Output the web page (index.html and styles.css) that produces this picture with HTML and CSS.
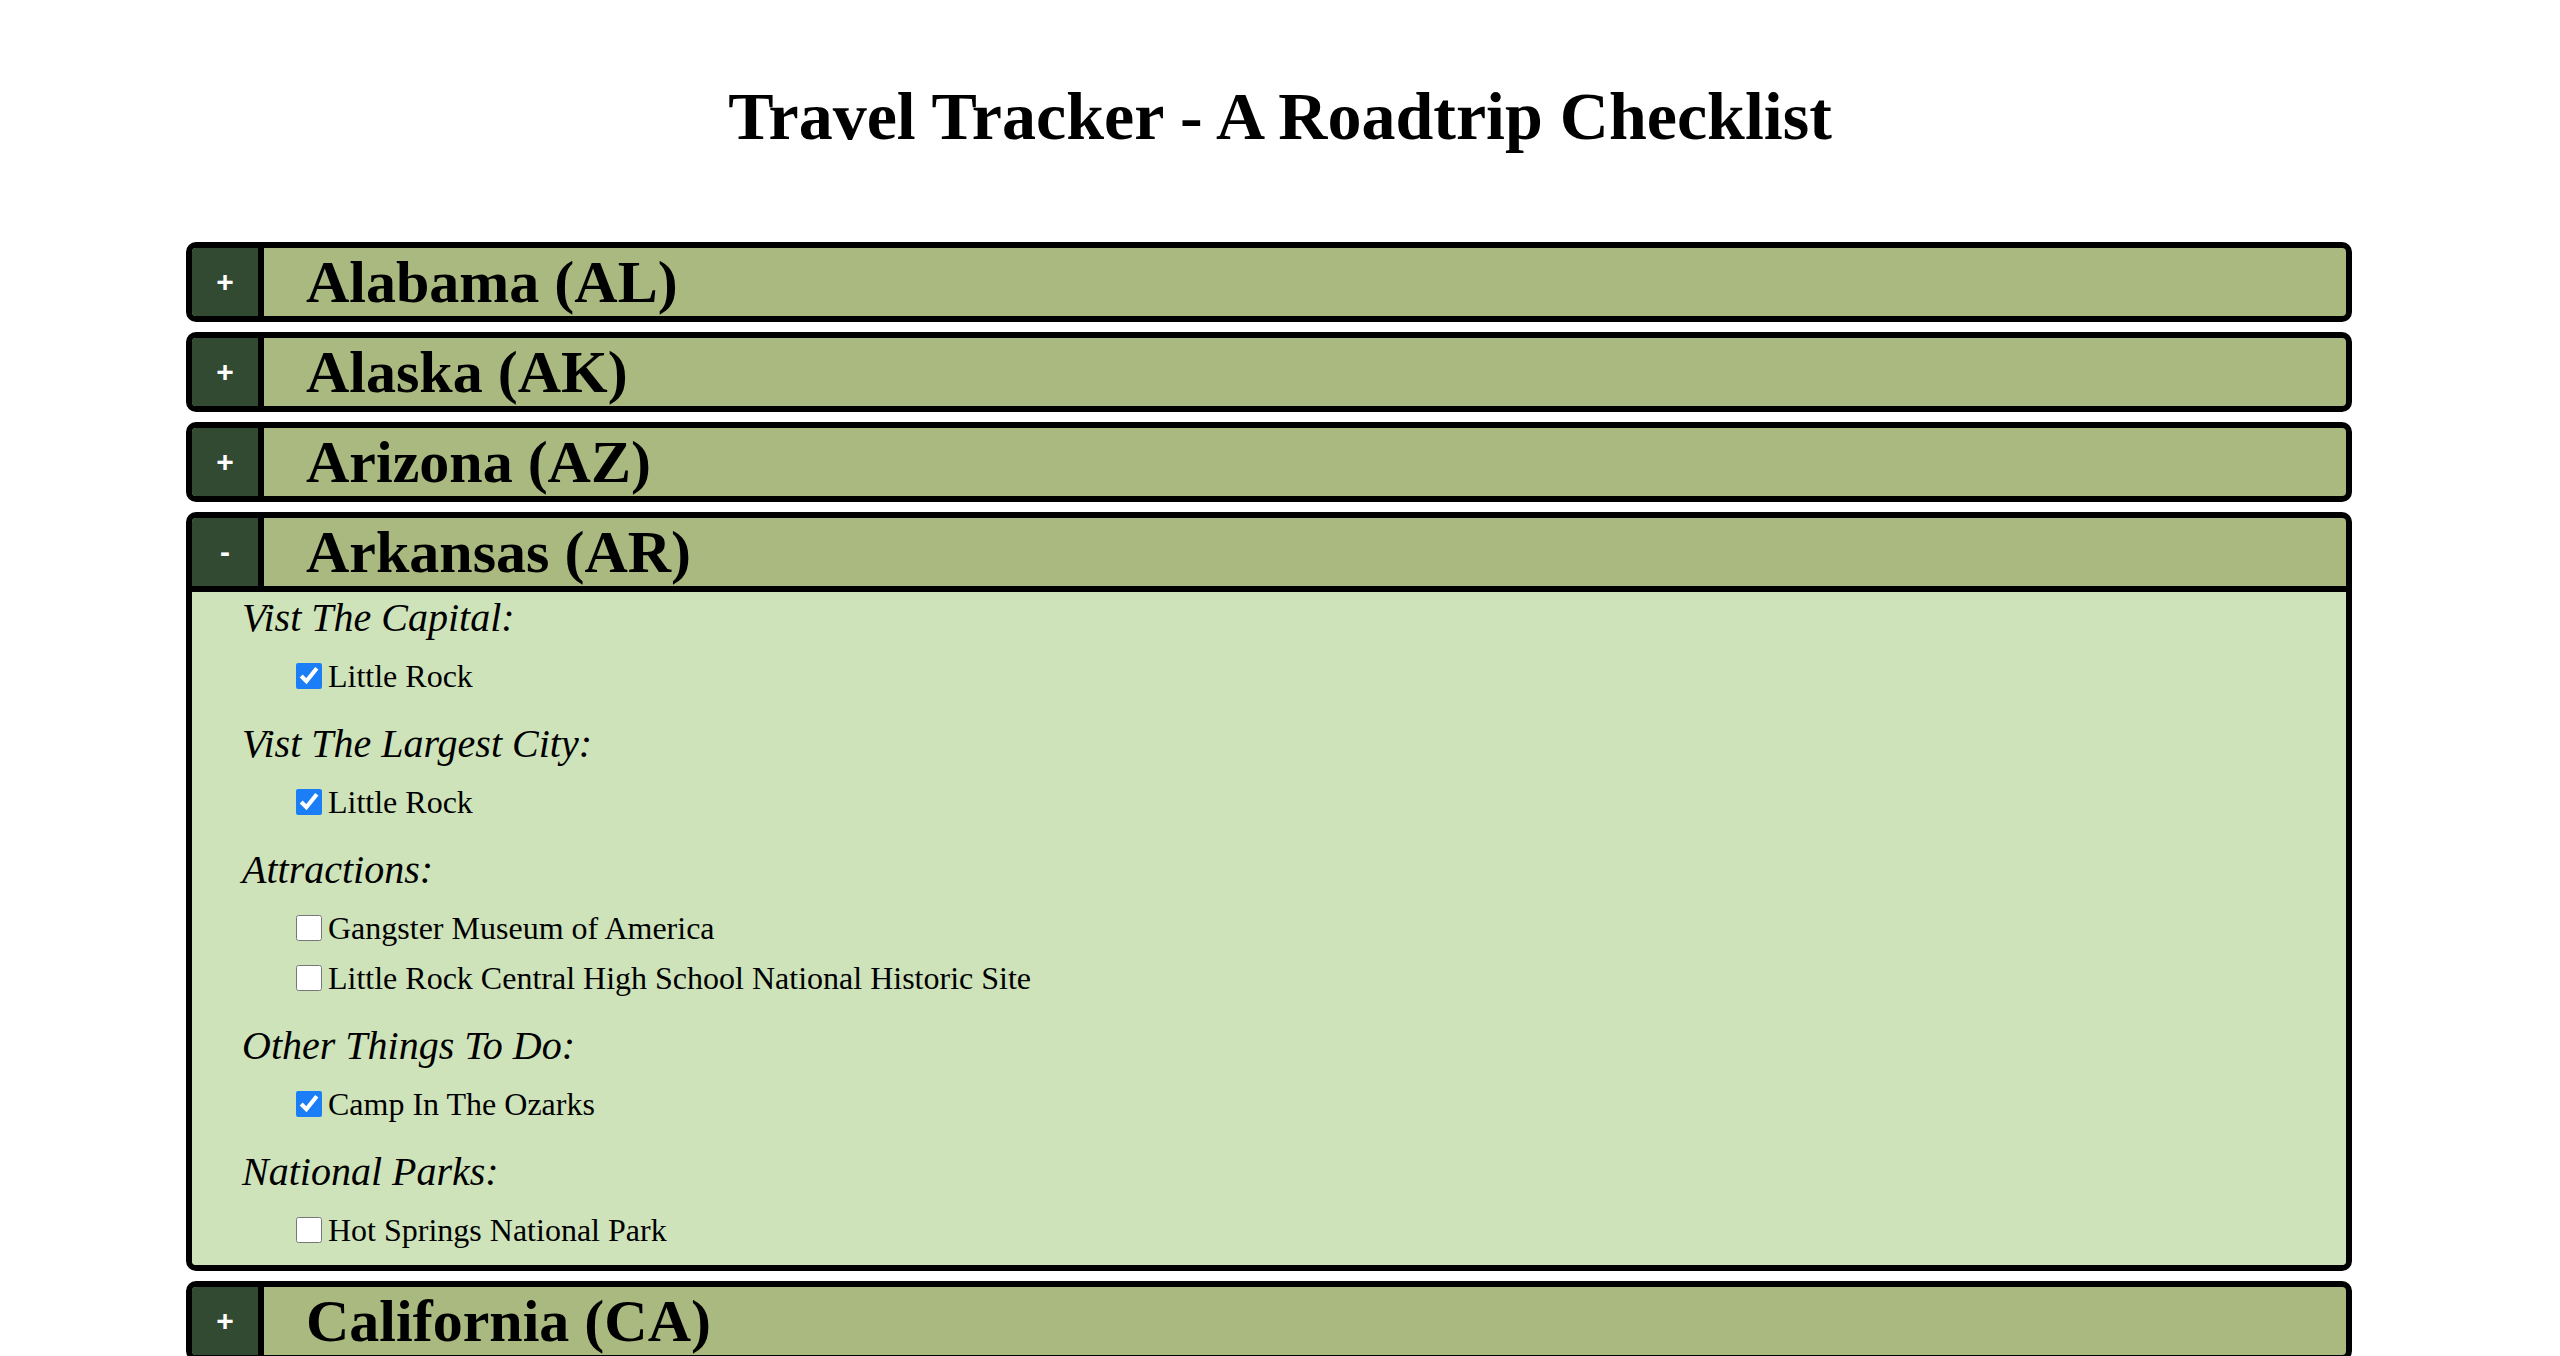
FILE: index.html
```html
<!DOCTYPE html>
<html lang="en">
<head>
<meta charset="utf-8">
<title>Travel Tracker - A Roadtrip Checklist</title>
<link rel="stylesheet" href="styles.css">
</head>
<body>
<h1 class="title">Travel Tracker - A Roadtrip Checklist</h1>
<main class="states">
  <section class="state">
    <div class="state-header"><button class="toggle">+</button><h2 class="state-name">Alabama (AL)</h2></div>
  </section>
  <section class="state">
    <div class="state-header"><button class="toggle">+</button><h2 class="state-name">Alaska (AK)</h2></div>
  </section>
  <section class="state">
    <div class="state-header"><button class="toggle">+</button><h2 class="state-name">Arizona (AZ)</h2></div>
  </section>
  <section class="state open">
    <div class="state-header"><button class="toggle">-</button><h2 class="state-name">Arkansas (AR)</h2></div>
    <div class="state-body">
      <div class="group">
        <h3 class="group-title">Vist The Capital:</h3>
        <label class="item"><input type="checkbox" checked>Little Rock</label>
      </div>
      <div class="group">
        <h3 class="group-title">Vist The Largest City:</h3>
        <label class="item"><input type="checkbox" checked>Little Rock</label>
      </div>
      <div class="group">
        <h3 class="group-title">Attractions:</h3>
        <label class="item"><input type="checkbox">Gangster Museum of America</label>
        <label class="item"><input type="checkbox">Little Rock Central High School National Historic Site</label>
      </div>
      <div class="group">
        <h3 class="group-title">Other Things To Do:</h3>
        <label class="item"><input type="checkbox" checked>Camp In The Ozarks</label>
      </div>
      <div class="group">
        <h3 class="group-title">National Parks:</h3>
        <label class="item"><input type="checkbox">Hot Springs National Park</label>
      </div>
    </div>
  </section>
  <section class="state">
    <div class="state-header"><button class="toggle">+</button><h2 class="state-name">California (CA)</h2></div>
  </section>
</main>
</body>
</html>
```
FILE: styles.css
```css
body {
  margin: 0;
  background: #ffffff;
  color: #000000;
  font-family: "Liberation Serif", "Times New Roman", serif;
}

.title {
  margin: 76px 0 86px;
  font-size: 68px;
  line-height: 80px;
  font-weight: bold;
  text-align: center;
}

.states {
  width: 2166px;
  margin-left: 186px;
  padding-bottom: 40px;
}

.state {
  border: 6px solid #000000;
  border-radius: 10px;
  overflow: hidden;
  margin-bottom: 10px;
  background: #a9b97f;
}

.state-header {
  display: flex;
  height: 68px;
}

.toggle {
  flex: none;
  box-sizing: border-box;
  width: 72px;
  height: 68px;
  padding: 0;
  border: none;
  border-right: 6px solid #000000;
  background: #334a32;
  color: #ffffff;
  font-family: "Liberation Sans", Arial, sans-serif;
  font-weight: bold;
  font-size: 30px;
  line-height: 68px;
  cursor: pointer;
}

.state-name {
  margin: 0;
  padding-left: 42px;
  font-size: 60px;
  line-height: 68px;
  font-weight: bold;
}

.state-body {
  border-top: 6px solid #000000;
  background: #cee3ba;
  padding: 2px 0 10px 50px;
}

.group + .group {
  margin-top: 19px;
}

.group-title {
  margin: 0 0 9px;
  font-size: 40px;
  line-height: 48px;
  font-style: italic;
  font-weight: normal;
}

.item {
  display: flex;
  align-items: center;
  height: 50px;
  padding-left: 46px;
  font-size: 32px;
}

.item input {
  flex: none;
  width: 26px;
  height: 26px;
  margin: 0 6px 0 8px;
  accent-color: #1b7ef6;
}
```
